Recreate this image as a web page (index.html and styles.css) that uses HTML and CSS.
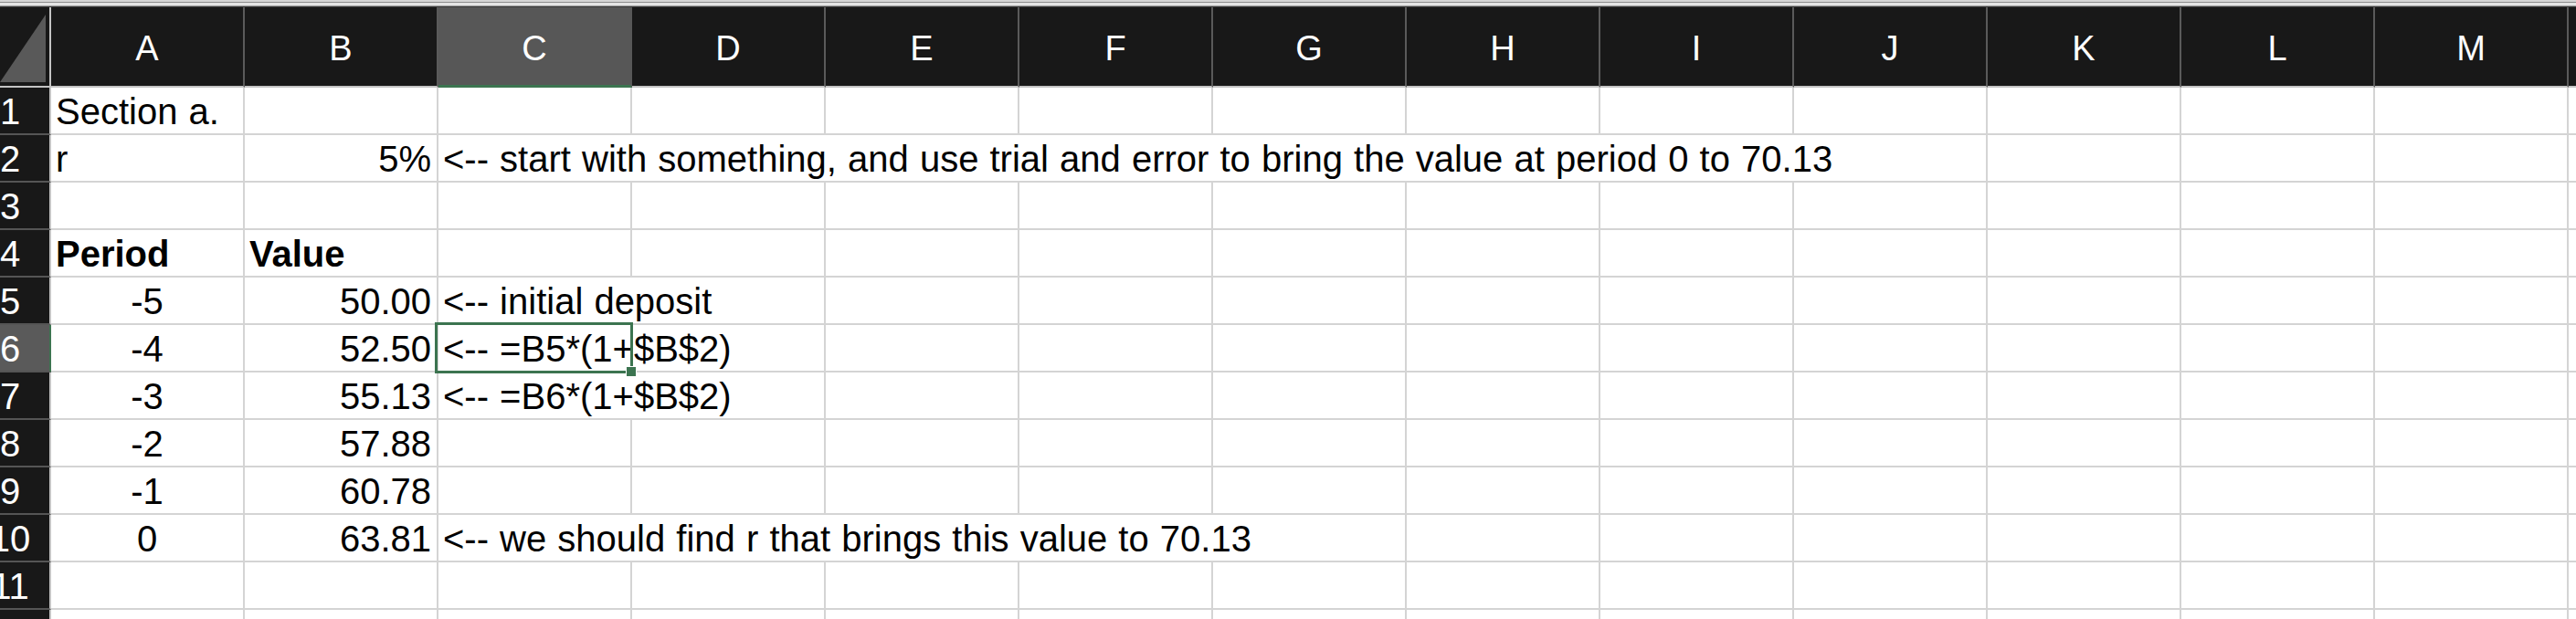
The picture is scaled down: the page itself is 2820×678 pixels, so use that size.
FILE: index.html
```html
<!DOCTYPE html>
<html>
<head>
<meta charset="utf-8">
<link rel="stylesheet" href="styles.css">
</head>
<body>
<div class="topstrip"></div>
<div class="sheet">
  <!-- header row -->
  <div class="corner"><svg class="corner-tri" width="54" height="86" viewBox="0 0 54 86"><polygon points="0,82 50,82 50,8" fill="#595959"/></svg></div>
  <div class="ch">A</div><div class="ch">B</div><div class="ch ch-sel">C</div><div class="ch">D</div><div class="ch">E</div><div class="ch">F</div><div class="ch">G</div><div class="ch">H</div><div class="ch">I</div><div class="ch">J</div><div class="ch">K</div><div class="ch">L</div><div class="ch">M</div><div class="ch"></div>

  <!-- row 1 -->
  <div class="rh"><span class="num">1</span></div>
  <div class="c">Section a.</div><div class="c"></div><div class="c"></div><div class="c"></div><div class="c"></div><div class="c"></div><div class="c"></div><div class="c"></div><div class="c"></div><div class="c"></div><div class="c"></div><div class="c"></div><div class="c"></div><div class="c"></div>

  <!-- row 2 -->
  <div class="rh"><span class="num">2</span></div>
  <div class="c">r</div><div class="c r">5%</div><div class="c span8">&lt;-- start with something, and use trial and error to bring the value at period 0 to 70.13</div><div class="c"></div><div class="c"></div><div class="c"></div><div class="c"></div>

  <!-- row 3 -->
  <div class="rh"><span class="num">3</span></div>
  <div class="c"></div><div class="c"></div><div class="c"></div><div class="c"></div><div class="c"></div><div class="c"></div><div class="c"></div><div class="c"></div><div class="c"></div><div class="c"></div><div class="c"></div><div class="c"></div><div class="c"></div><div class="c"></div>

  <!-- row 4 -->
  <div class="rh"><span class="num">4</span></div>
  <div class="c b">Period</div><div class="c b">Value</div><div class="c"></div><div class="c"></div><div class="c"></div><div class="c"></div><div class="c"></div><div class="c"></div><div class="c"></div><div class="c"></div><div class="c"></div><div class="c"></div><div class="c"></div><div class="c"></div>

  <!-- row 5 -->
  <div class="rh"><span class="num">5</span></div>
  <div class="c m">-5</div><div class="c r">50.00</div><div class="c span2">&lt;-- initial deposit</div><div class="c"></div><div class="c"></div><div class="c"></div><div class="c"></div><div class="c"></div><div class="c"></div><div class="c"></div><div class="c"></div><div class="c"></div><div class="c"></div>

  <!-- row 6 -->
  <div class="rh rh-sel"><span class="num">6</span></div>
  <div class="c m">-4</div><div class="c r">52.50</div><div class="c span2 active">&lt;-- =B5*(1+$B$2)<span class="handle"></span></div><div class="c"></div><div class="c"></div><div class="c"></div><div class="c"></div><div class="c"></div><div class="c"></div><div class="c"></div><div class="c"></div><div class="c"></div><div class="c"></div>

  <!-- row 7 -->
  <div class="rh"><span class="num">7</span></div>
  <div class="c m">-3</div><div class="c r">55.13</div><div class="c span2">&lt;-- =B6*(1+$B$2)</div><div class="c"></div><div class="c"></div><div class="c"></div><div class="c"></div><div class="c"></div><div class="c"></div><div class="c"></div><div class="c"></div><div class="c"></div><div class="c"></div>

  <!-- row 8 -->
  <div class="rh"><span class="num">8</span></div>
  <div class="c m">-2</div><div class="c r">57.88</div><div class="c"></div><div class="c"></div><div class="c"></div><div class="c"></div><div class="c"></div><div class="c"></div><div class="c"></div><div class="c"></div><div class="c"></div><div class="c"></div><div class="c"></div><div class="c"></div>

  <!-- row 9 -->
  <div class="rh"><span class="num">9</span></div>
  <div class="c m">-1</div><div class="c r">60.78</div><div class="c"></div><div class="c"></div><div class="c"></div><div class="c"></div><div class="c"></div><div class="c"></div><div class="c"></div><div class="c"></div><div class="c"></div><div class="c"></div><div class="c"></div><div class="c"></div>

  <!-- row 10 -->
  <div class="rh"><span class="num">10</span></div>
  <div class="c m">0</div><div class="c r">63.81</div><div class="c span5">&lt;-- we should find r that brings this value to 70.13</div><div class="c"></div><div class="c"></div><div class="c"></div><div class="c"></div><div class="c"></div><div class="c"></div><div class="c"></div>

  <!-- row 11 -->
  <div class="rh"><span class="num">11</span></div>
  <div class="c"></div><div class="c"></div><div class="c"></div><div class="c"></div><div class="c"></div><div class="c"></div><div class="c"></div><div class="c"></div><div class="c"></div><div class="c"></div><div class="c"></div><div class="c"></div><div class="c"></div><div class="c"></div>

  <!-- row 12 (partially visible) -->
  <div class="rh"></div>
  <div class="c"></div><div class="c"></div><div class="c"></div><div class="c"></div><div class="c"></div><div class="c"></div><div class="c"></div><div class="c"></div><div class="c"></div><div class="c"></div><div class="c"></div><div class="c"></div><div class="c"></div><div class="c"></div>
</div>
</body>
</html>
```

FILE: styles.css
```css
html, body {
  margin: 0;
  padding: 0;
  background: #ffffff;
}
body {
  width: 2820px;
  height: 678px;
  overflow: hidden;
  font-family: "Liberation Sans", Arial, sans-serif;
}
.topstrip {
  height: 8px;
  background: linear-gradient(to bottom,
    #d6d6d6 0px, #d6d6d6 2px,
    #8c8c8c 2px, #8c8c8c 3px,
    #e4e4e4 3px, #e4e4e4 6px,
    #9a9a9a 6px, #9a9a9a 7px,
    #3a3a3a 7px, #3a3a3a 8px);
}
.sheet {
  display: grid;
  grid-template-columns: 56px repeat(13, 212px) 1fr;
  grid-template-rows: 88px repeat(12, 52px);
  height: 670px;
  overflow: hidden;
}
.corner {
  background: #181818;
  border-right: 2px solid #c4c4c4;
  border-bottom: 2px solid #c4c4c4;
  box-sizing: border-box;
  overflow: hidden;
}
.corner-tri {
  display: block;
}
.ch {
  background: #181818;
  color: #ffffff;
  border-right: 2px solid #5a5a5a;
  border-bottom: 2px solid #c4c4c4;
  box-sizing: border-box;
  display: flex;
  justify-content: center;
  align-items: flex-start;
  padding-top: 26px;
  font-size: 38px;
  line-height: 38px;
  white-space: nowrap;
  overflow: hidden;
}
.ch-sel {
  background: #575757;
  border-bottom: 3px solid #3c7450;
  border-right-color: #575757;
}
.rh {
  background: #181818;
  color: #ffffff;
  border-right: 2px solid #c4c4c4;
  border-bottom: 2px solid #555555;
  box-sizing: border-box;
  display: flex;
  align-items: flex-start;
  padding-top: 6px;
  font-size: 40px;
  line-height: 40px;
  overflow: hidden;
}
.rh-sel {
  background: #5a5a5a;
  border-right-color: #3c7450;
}
.num {
  width: 22px;
  flex: 0 0 22px;
  display: flex;
  justify-content: center;
  white-space: nowrap;
}
.c {
  background: #ffffff;
  color: #000000;
  border-right: 2px solid #d4d4d4;
  border-bottom: 2px solid #d4d4d4;
  box-sizing: border-box;
  padding: 6px 6px 0 5px;
  font-size: 40px;
  line-height: 40px;
  word-spacing: 1px;
  white-space: nowrap;
  overflow: visible;
  min-width: 0;
}
.c.r { text-align: right; }
.c.m { text-align: center; padding-left: 0; padding-right: 0; }
.c.b { font-weight: bold; }
.span2 { grid-column: span 2; }
.span5 { grid-column: span 5; }
.span8 { grid-column: span 8; }
.active {
  position: relative;
}
.active::after {
  content: "";
  position: absolute;
  left: -4px;
  top: -3px;
  width: 217px;
  height: 56px;
  border: 3px solid #3c7450;
  box-sizing: border-box;
  z-index: 2;
}
.handle {
  position: absolute;
  left: 205px;
  top: 45px;
  width: 12px;
  height: 12px;
  background: #3c7450;
  border: 1px solid #ffffff;
  box-sizing: border-box;
  z-index: 3;
}
```
